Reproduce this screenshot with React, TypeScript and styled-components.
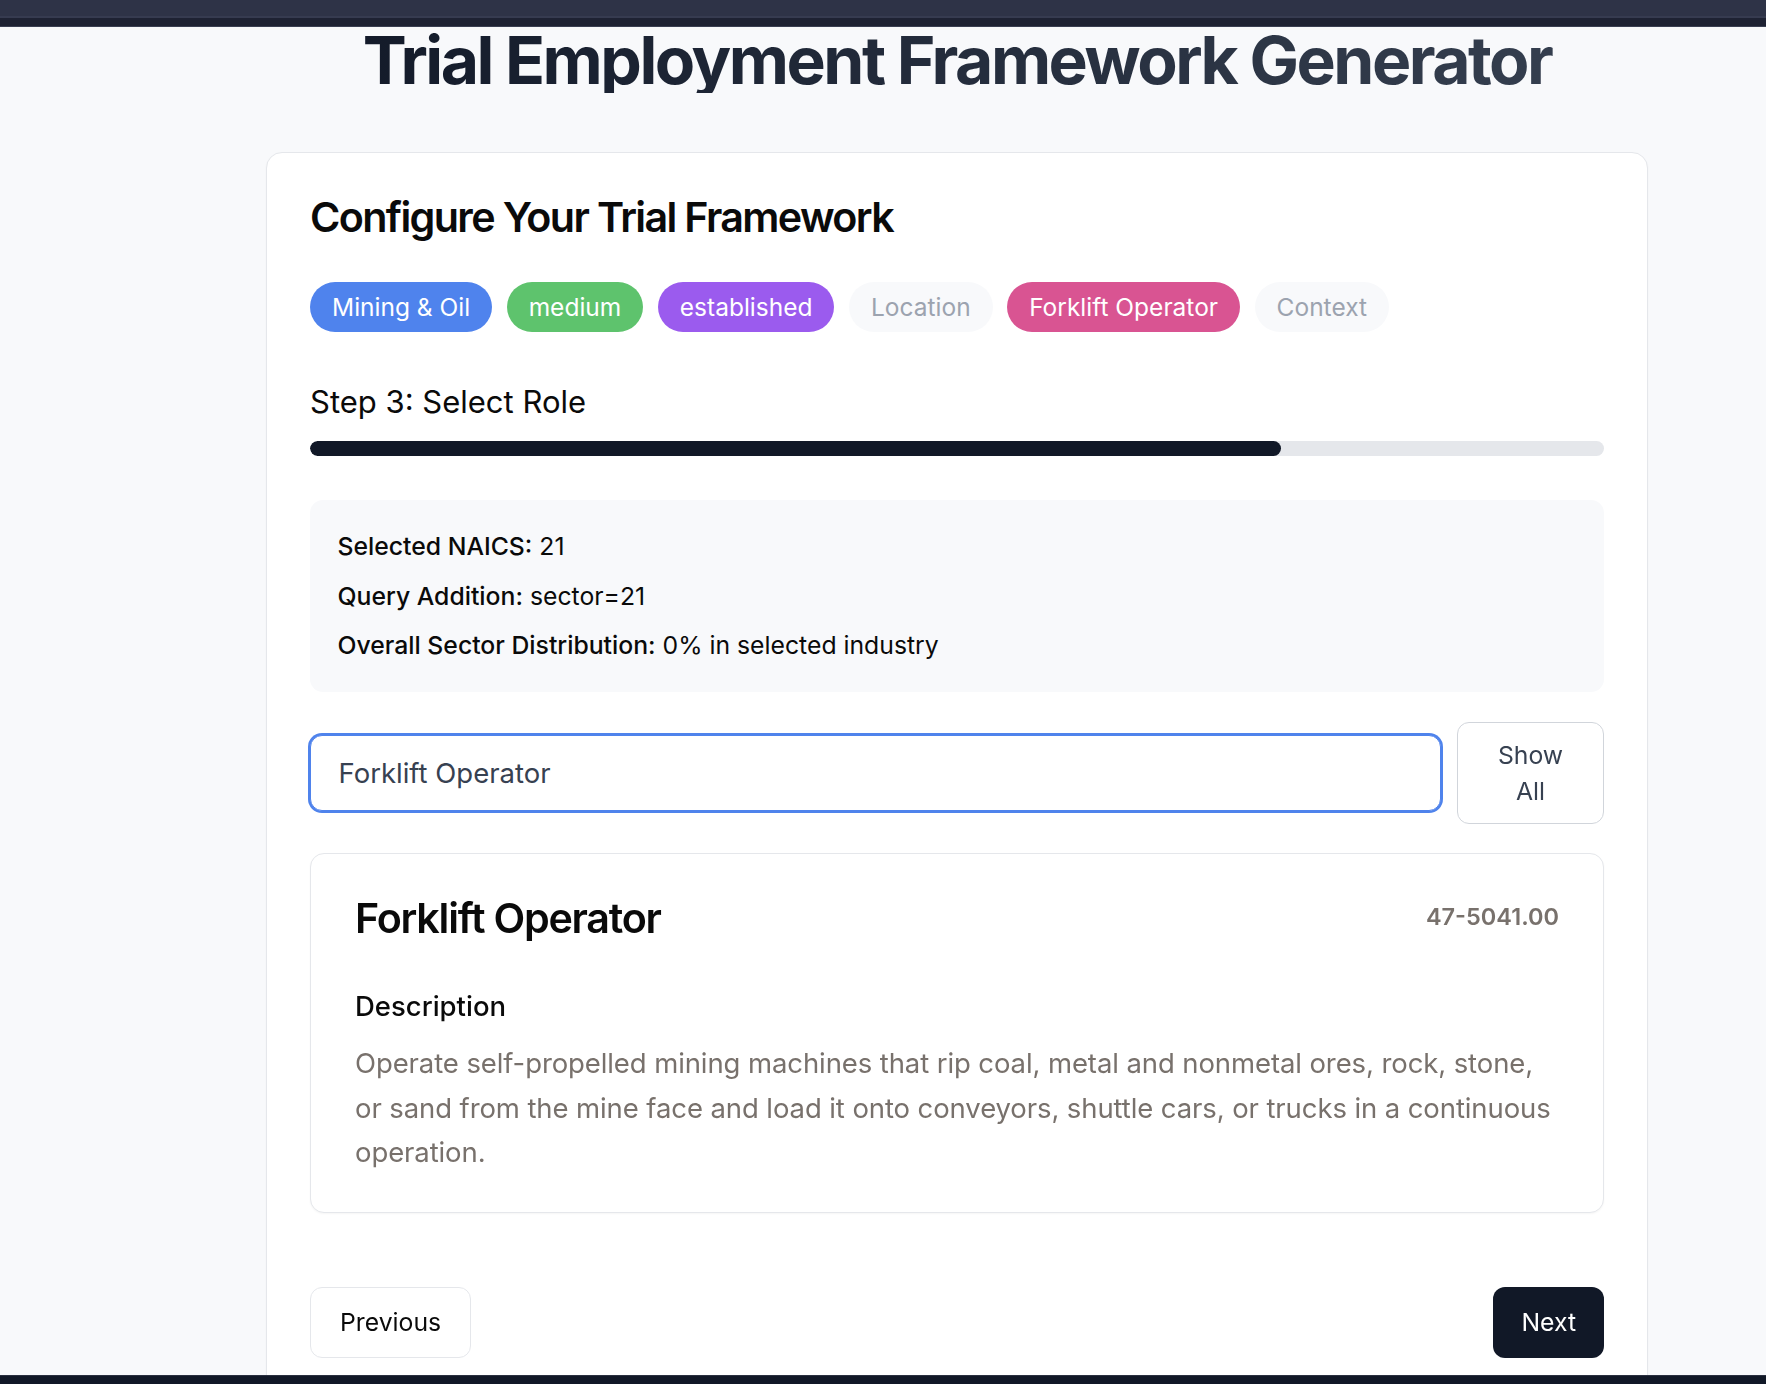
import React, { useEffect, useRef, useState } from "react";
import styled, { createGlobalStyle } from "styled-components";

const GlobalStyle = createGlobalStyle`
  * { box-sizing: border-box; }
  html, body { margin: 0; padding: 0; }
  body {
    background: #f8f9fb;
    font-family: "Inter", "Noto Sans", sans-serif;
    color: #0a0a0a;
    -webkit-font-smoothing: antialiased;
  }
`;

const TopBar = styled.header`
  height: 18px;
  background: #2e3347;
  border-bottom: 2px solid #363b50;
`;

const SubBar = styled.div`
  height: 9px;
  background: #1e2233;
  border-bottom: 1px solid #3a3f52;
`;

const Main = styled.main`
  width: 1382px;
  margin-left: 266px;
`;

const PageTitle = styled.h1`
  margin: 0 0 59px;
  font-size: 66px;
  line-height: 66px;
  font-weight: 700;
  letter-spacing: -0.038em;
  text-align: center;
  background: linear-gradient(90deg, #111827, #374151);
  -webkit-background-clip: text;
  background-clip: text;
  color: transparent;
`;

const Card = styled.section`
  background: #ffffff;
  border: 1px solid #e5e7eb;
  border-radius: 16px;
  box-shadow: 0 1px 2px rgba(0, 0, 0, 0.04);
`;

const CardHeader = styled.div`
  padding: 44px 43px;
`;

const CardTitle = styled.h2<{ $tracking?: number }>`
  margin: 0;
  font-size: 41.25px;
  line-height: 1;
  font-weight: 600;
  letter-spacing: ${(p) => p.$tracking ?? -0.04}em;
  color: #0a0a0a;
`;

const CardBody = styled.div`
  padding: 0 43px 44px;
`;

const PillRow = styled.div`
  display: flex;
  flex-wrap: wrap;
  gap: 14.5px;
`;

const Pill = styled.span<{ $bg: string; $fg: string }>`
  display: inline-flex;
  align-items: center;
  padding: 5.5px 22px;
  border-radius: 999px;
  font-size: 24.5px;
  line-height: 38.5px;
  background: ${(p) => p.$bg};
  color: ${(p) => p.$fg};
`;

const StepLabel = styled.h3`
  margin: 48.5px 0 0;
  font-size: 31px;
  line-height: 44px;
  font-weight: 400;
  color: #0a0a0a;
`;

const Track = styled.div`
  margin-top: 17px;
  height: 14.5px;
  border-radius: 999px;
  background: #e5e7eb;
  overflow: hidden;
`;

const Fill = styled.div`
  height: 100%;
  border-radius: 999px;
  background: #111827;
`;

const InfoBox = styled.div`
  margin-top: 44px;
  padding: 27.5px;
  border-radius: 13px;
  background: #f8f9fb;
  display: flex;
  flex-direction: column;
  gap: 11px;
`;

const InfoLine = styled.p`
  margin: 0;
  font-size: 24.75px;
  line-height: 38.5px;
  color: #0a0a0a;
`;

const InfoLabel = styled.span`
  font-weight: 500;
`;

const SearchRow = styled.div`
  margin-top: 30px;
  display: flex;
  align-items: center;
  gap: 16px;
`;

const SearchInput = styled.input`
  flex: 1;
  min-width: 0;
  height: 76px;
  padding: 0 27.5px;
  border: 1px solid #4f83ec;
  box-shadow: 0 0 0 2px #4f83ec;
  border-radius: 12px;
  font-family: inherit;
  font-size: 27.5px;
  color: #374151;
  caret-color: #111827;
  outline: none;
  background: #ffffff;
`;

const OutlineButton = styled.button<{ $wrap?: boolean }>`
  font-family: inherit;
  font-size: 24.75px;
  line-height: ${(p) => (p.$wrap ? "36px" : "38.5px")};
  font-weight: 400;
  color: ${(p) => (p.$wrap ? "#374151" : "#0a0a0a")};
  background: #ffffff;
  border: 1px solid ${(p) => (p.$wrap ? "#d1d5db" : "#e5e7eb")};
  border-radius: 12px;
  cursor: pointer;
  ${(p) =>
    p.$wrap
      ? `width: 147px; padding: 14px 26px; flex-shrink: 0; text-align: center;`
      : `height: 71px; padding: 0 29px;`}
`;

const SolidButton = styled.button`
  height: 71px;
  padding: 0 28px;
  font-family: inherit;
  font-size: 24.75px;
  line-height: 38.5px;
  font-weight: 400;
  color: #ffffff;
  background: #111827;
  border: none;
  border-radius: 12px;
  cursor: pointer;
`;

const RoleCard = styled.article`
  margin-top: 29px;
  padding: 44px 44px 37px;
  border: 1px solid #e5e7eb;
  border-radius: 14px;
  background: #ffffff;
  box-shadow: 0 1px 2px rgba(0, 0, 0, 0.04);
`;

const RoleHeader = styled.div`
  display: flex;
  justify-content: space-between;
  align-items: flex-start;
`;

const RoleCode = styled.span`
  font-size: 23.5px;
  line-height: 38.5px;
  font-weight: 600;
  color: #78716c;
`;

const SectionLabel = styled.h4`
  margin: 47.5px 0 0;
  font-size: 27.5px;
  line-height: 38.5px;
  font-weight: 500;
  color: #0a0a0a;
`;

const Description = styled.p`
  margin: 15.5px 0 0;
  font-size: 27.5px;
  line-height: 44.7px;
  letter-spacing: -0.1px;
  color: #78716c;
`;

const NavRow = styled.div`
  margin-top: 74px;
  display: flex;
  justify-content: space-between;
  align-items: center;
`;

const BottomBar = styled.footer`
  position: fixed;
  left: 0;
  right: 0;
  bottom: 0;
  height: 9px;
  background: #111827;
  border-top: 1px solid #2a3040;
`;

const pills = [
  { label: "Mining & Oil", bg: "#4f83ed", fg: "#ffffff" },
  { label: "medium", bg: "#5ec36d", fg: "#ffffff" },
  { label: "established", bg: "#9b5bee", fg: "#ffffff" },
  { label: "Location", bg: "#f8f9fb", fg: "#9ca3af" },
  { label: "Forklift Operator", bg: "#d95492", fg: "#ffffff" },
  { label: "Context", bg: "#f8f9fb", fg: "#9ca3af" },
];

export default function App() {
  const [query, setQuery] = useState("Forklift Operator");
  const inputRef = useRef<HTMLInputElement>(null);
  const progress = 75;

  useEffect(() => {
    const el = inputRef.current;
    if (el) {
      el.focus();
      el.setSelectionRange(el.value.length, el.value.length);
    }
  }, []);

  return (
    <>
      <GlobalStyle />
      <TopBar />
      <SubBar />
      <Main>
        <PageTitle>Trial Employment Framework Generator</PageTitle>
        <Card>
          <CardHeader>
            <CardTitle>Configure Your Trial Framework</CardTitle>
          </CardHeader>
          <CardBody>
            <PillRow>
              {pills.map((p) => (
                <Pill key={p.label} $bg={p.bg} $fg={p.fg}>
                  {p.label}
                </Pill>
              ))}
            </PillRow>

            <StepLabel>Step 3: Select Role</StepLabel>
            <Track>
              <Fill style={{ width: `${progress}%` }} />
            </Track>

            <InfoBox>
              <InfoLine>
                <InfoLabel>Selected NAICS:</InfoLabel> 21
              </InfoLine>
              <InfoLine>
                <InfoLabel>Query Addition:</InfoLabel> sector=21
              </InfoLine>
              <InfoLine>
                <InfoLabel>Overall Sector Distribution:</InfoLabel> 0% in selected industry
              </InfoLine>
            </InfoBox>

            <SearchRow>
              <SearchInput
                ref={inputRef}
                value={query}
                onChange={(e) => setQuery(e.target.value)}
              />
              <OutlineButton $wrap>Show All</OutlineButton>
            </SearchRow>

            <RoleCard>
              <RoleHeader>
                <CardTitle $tracking={-0.03}>Forklift Operator</CardTitle>
                <RoleCode>47-5041.00</RoleCode>
              </RoleHeader>
              <SectionLabel>Description</SectionLabel>
              <Description>
                Operate self-propelled mining machines that rip coal, metal and nonmetal ores, rock,
                stone, or sand from the mine face and load it onto conveyors, shuttle cars, or trucks
                in a continuous operation.
              </Description>
            </RoleCard>

            <NavRow>
              <OutlineButton>Previous</OutlineButton>
              <SolidButton>Next</SolidButton>
            </NavRow>
          </CardBody>
        </Card>
      </Main>
      <BottomBar />
    </>
  );
}
